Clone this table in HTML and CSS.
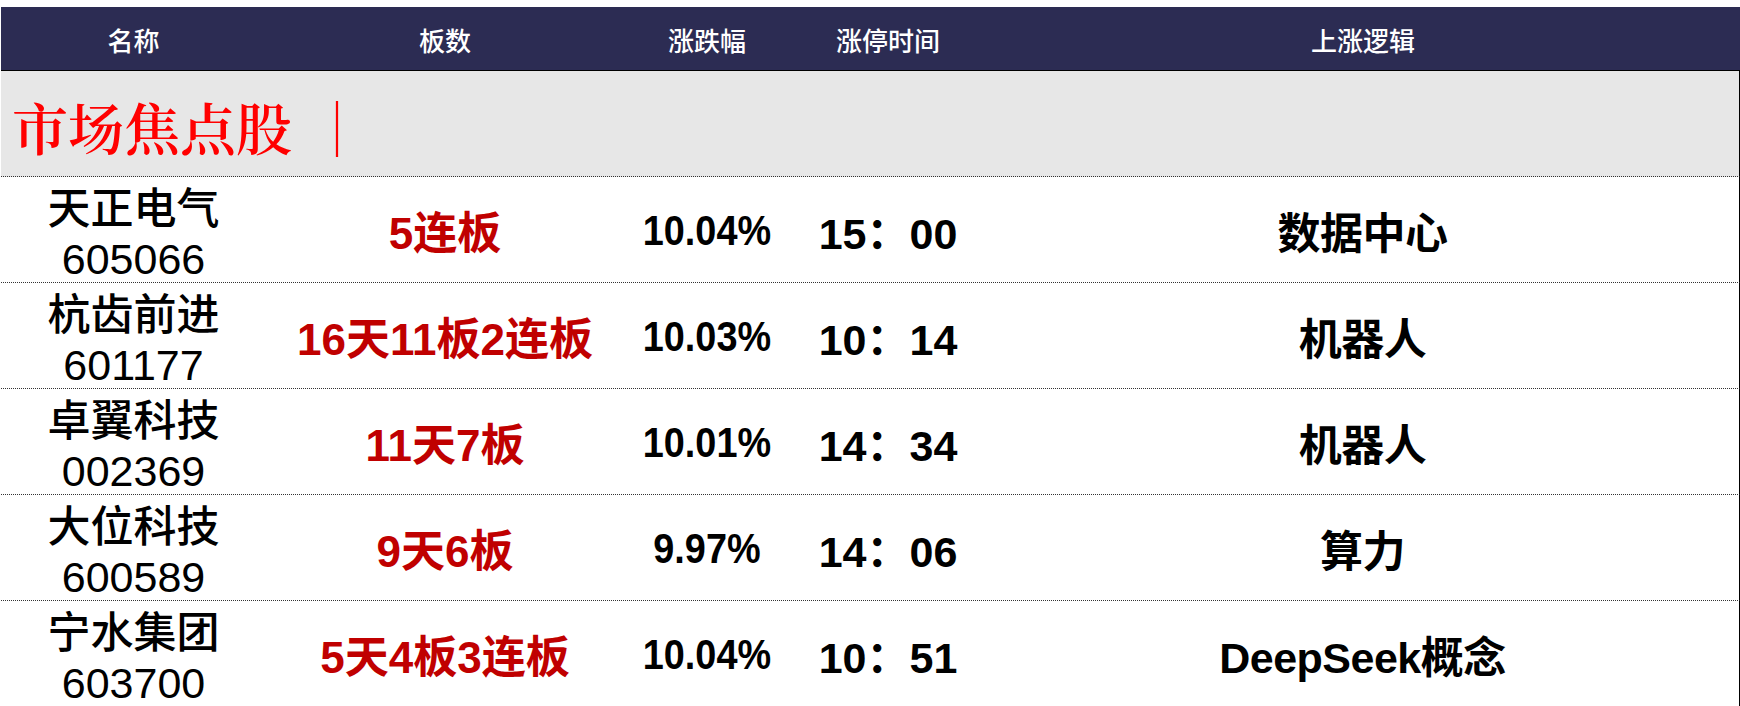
FILE: index.html
```html
<!DOCTYPE html>
<html lang="zh-CN">
<head>
<meta charset="utf-8">
<title>市场焦点股</title>
<link rel="stylesheet" href="styles.css">
</head>
<body>
<div class="page">
  <div class="sheet">
    <div class="row head">
      <div class="cell">名称</div>
      <div class="cell">板数</div>
      <div class="cell">涨跌幅</div>
      <div class="cell">涨停时间</div>
      <div class="cell">上涨逻辑</div>
    </div>
    <div class="section">
      <span class="section-title">市场焦点股</span><span class="section-bar">｜</span>
    </div>
    <div class="row data">
      <div class="cell name"><span class="cn">天正电气</span><span class="code">605066</span></div>
      <div class="cell boards">5连板</div>
      <div class="cell pct"><span class="narrow">10.04%</span></div>
      <div class="cell time">15：00</div>
      <div class="cell logic">数据中心</div>
    </div>
    <div class="row data">
      <div class="cell name"><span class="cn">杭齿前进</span><span class="code">601177</span></div>
      <div class="cell boards">16天11板2连板</div>
      <div class="cell pct"><span class="narrow">10.03%</span></div>
      <div class="cell time">10：14</div>
      <div class="cell logic">机器人</div>
    </div>
    <div class="row data">
      <div class="cell name"><span class="cn">卓翼科技</span><span class="code">002369</span></div>
      <div class="cell boards">11天7板</div>
      <div class="cell pct"><span class="narrow">10.01%</span></div>
      <div class="cell time">14：34</div>
      <div class="cell logic">机器人</div>
    </div>
    <div class="row data">
      <div class="cell name"><span class="cn">大位科技</span><span class="code">600589</span></div>
      <div class="cell boards">9天6板</div>
      <div class="cell pct"><span class="narrow">9.97%</span></div>
      <div class="cell time">14：06</div>
      <div class="cell logic">算力</div>
    </div>
    <div class="row data">
      <div class="cell name"><span class="cn">宁水集团</span><span class="code">603700</span></div>
      <div class="cell boards">5天4板3连板</div>
      <div class="cell pct"><span class="narrow">10.04%</span></div>
      <div class="cell time">10：51</div>
      <div class="cell logic">DeepSeek概念</div>
    </div>
  </div>
</div>
</body>
</html>
```

FILE: styles.css
```css
* {
  box-sizing: border-box;
}

html, body {
  margin: 0;
  padding: 0;
  background: #ffffff;
}

body {
  font-family: "Liberation Sans", "Noto Sans CJK SC", sans-serif;
  overflow: hidden;
}

.page {
  padding-top: 7px;
  width: 1740px;
  height: 706px;
}

.sheet {
  width: 1740px;
  padding-left: 1px;
}

.row {
  display: grid;
  grid-template-columns: 265px 358px 166px 196px 1fr;
}

.cell {
  display: flex;
  align-items: center;
  justify-content: center;
  text-align: center;
  white-space: nowrap;
}

.head {
  height: 64px;
  background: #2c2c53;
  border-bottom: 1px solid #000000;
  color: #ffffff;
  font-family: "Noto Sans CJK SC", sans-serif;
  font-size: 26px;
  font-weight: 500;
  padding-top: 1px;
}

.section {
  height: 106px;
  background: #e7e7e7;
  border-right: 1px solid #000000;
  border-bottom: 1px dotted #333333;
  display: flex;
  align-items: center;
  padding-left: 11px;
  padding-top: 4px;
  color: #ff0000;
  font-family: "Noto Serif CJK SC", "Noto Sans CJK SC", serif;
  font-size: 56px;
  font-weight: 600;
  line-height: 1;
}

.section-bar {
  margin-left: 17px;
  font-weight: 400;
}

.data {
  height: 106px;
  border-right: 1px solid #000000;
  border-bottom: 1px dotted #333333;
  color: #000000;
  font-size: 43px;
}

.name {
  flex-direction: column;
  line-height: 54px;
  padding-top: 1px;
}

.name .cn {
  font-family: "Noto Sans CJK SC", sans-serif;
  font-weight: 500;
}

.name .code {
  font-family: "Liberation Sans", sans-serif;
  font-weight: 400;
}

.boards {
  color: #c00000;
  font-weight: 700;
  font-size: 44px;
  padding-bottom: 3px;
}

.pct {
  font-weight: 700;
  padding-bottom: 3px;
}

.narrow {
  display: inline-block;
  transform: scaleX(0.88);
}

.time {
  font-weight: 700;
  padding-bottom: 3px;
}

.logic {
  font-weight: 700;
  padding-bottom: 3px;
  letter-spacing: -0.5px;
}
```
